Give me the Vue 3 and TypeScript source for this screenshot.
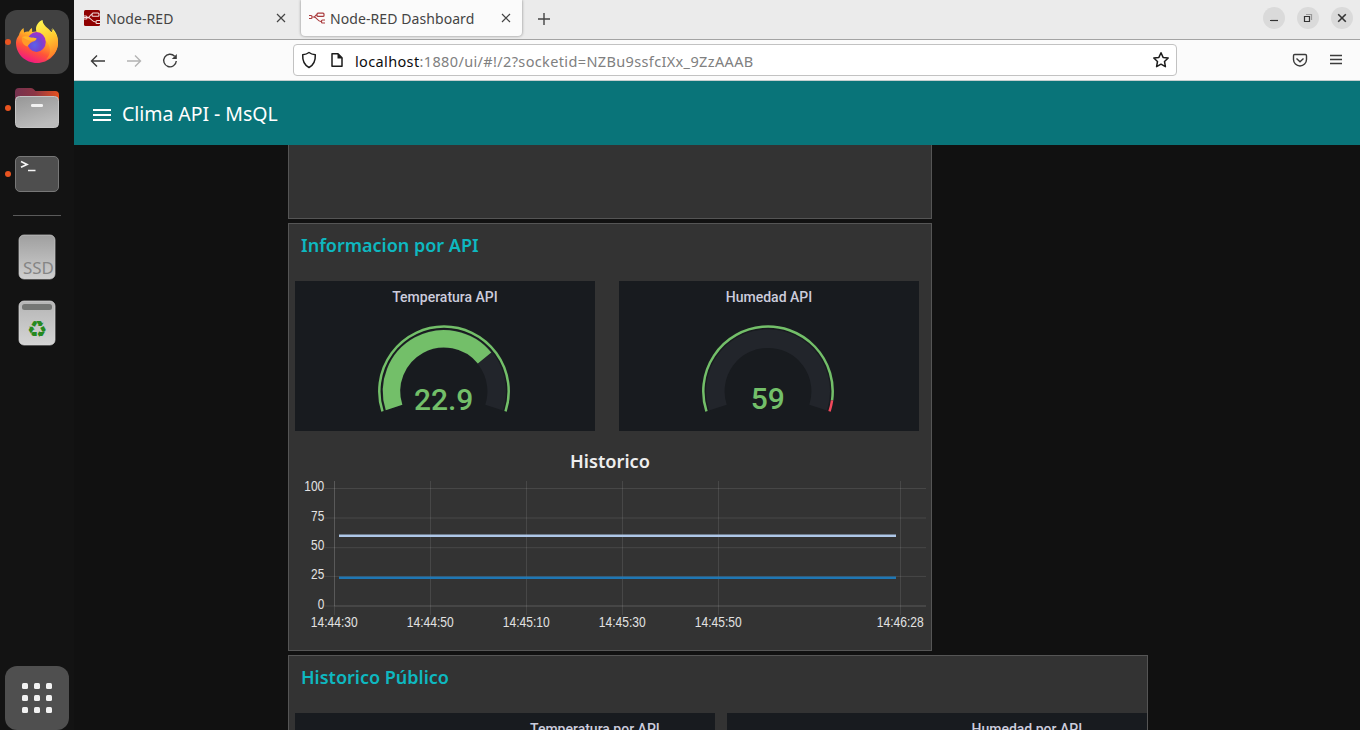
<script setup lang="ts">
interface Gauge {
  title: string
  value: string
  baseline: number
  valueEnd: number | null
  redFrom: number | null
}

const gauges: Gauge[] = [
  { title: 'Temperatura API', value: '22.9', baseline: 129, valueEnd: 50.6, redFrom: null },
  { title: 'Humedad API', value: '59', baseline: 127.5, valueEnd: null, redFrom: 98 },
]

const CX = 149
const CY = 110.3

// Angles are in degrees, clockwise from the top of the dial.
function arc(r: number, from: number, to: number): string {
  const point = (deg: number) => {
    const a = (deg * Math.PI) / 180
    return `${(CX + r * Math.sin(a)).toFixed(2)} ${(CY - r * Math.cos(a)).toFixed(2)}`
  }
  return `M${point(from)}A${r} ${r} 0 ${to - from > 180 ? 1 : 0} 1 ${point(to)}`
}

const xTicks = [
  { x: 39.5, label: '14:44:30' },
  { x: 135.5, label: '14:44:50' },
  { x: 231.5, label: '14:45:10' },
  { x: 327.5, label: '14:45:30' },
  { x: 423.5, label: '14:45:50' },
  { x: 605.5, label: '14:46:28' },
]
const yTicks = [
  { y: 48.5, label: '100', w: 20 },
  { y: 78, label: '75', w: 13.2 },
  { y: 107.7, label: '50', w: 13.2 },
  { y: 136.4, label: '25', w: 13.2 },
  { y: 166, label: '0', w: 6.6 },
]
</script>

<template>
  <div class="desktop">
    <aside class="dock">
      <div class="item tile running">
        <svg width="46" height="46" viewBox="0 0 46 46">
          <defs>
            <linearGradient id="ffBody" x1="0.8" y1="0.05" x2="0.3" y2="1">
              <stop offset="0" stop-color="#fff04a" />
              <stop offset="0.35" stop-color="#ffa726" />
              <stop offset="0.65" stop-color="#ff5438" />
              <stop offset="1" stop-color="#f0128a" />
            </linearGradient>
            <radialGradient id="ffGlobe" cx="0.4" cy="0.65" r="0.65">
              <stop offset="0" stop-color="#5a62ea" />
              <stop offset="0.55" stop-color="#7344d2" />
              <stop offset="1" stop-color="#a531c9" />
            </radialGradient>
            <linearGradient id="ffTail" x1="0.3" y1="0" x2="0.6" y2="1">
              <stop offset="0" stop-color="#fff44f" />
              <stop offset="0.5" stop-color="#ffc82f" />
              <stop offset="1" stop-color="#ff7b28" />
            </linearGradient>
          </defs>
          <path d="M5 16c.5-3 2-5 4.500-7l.6 4.500c1.400-1 3-1.300 4.900-1 .4-1.500 1.500-2.700 3-3.500l.2 4c5-1 8-1 10-1 4-2 9 0 11 2 0-2-.4-3.500-1.200-5 4.500 4 6 9 6 14.500C44 35 34.500 44 23 44S2 35 2 24c0-3 1-5.500 3-8z" fill="url(#ffBody)" />
          <path d="M22 10c0-4 3-8 6.500-9 .3 4 2.500 6 5.500 8.500 2 1.700 3.300 3.500 4 5.500.2-2 0-3.300-.8-5C42 14 44 18 44 23.500c0 9-6 15-12 17 4-4 5-9 3-14-2-6-7-7-9-10-1.500-1-4-3-4-6.500z" fill="url(#ffTail)" />
          <ellipse cx="22.500" cy="23" rx="9.300" ry="10" fill="url(#ffGlobe)" />
          <path d="M8 18c5-2 7 .5 9.500.7 3 .2 4.700.1 5 1-.4 2.300-4 2.800-5.500 3.700-1.700 1.200-2.700 2.700-3.500 4.100C9.500 27 7 22 8 18z" fill="#ff9a28" />
          <path d="M8 18c5-2 7 .5 9.500.7 3 .2 4.700.1 5 1-.6 1.800-5 2.400-8 1.600C12 20.500 10 19 8 18z" fill="#ffb52b" />
        </svg>
      </div>
      <div class="item running">
        <svg width="46" height="42" viewBox="0 0 46 42">
          <defs>
            <linearGradient id="folderBack"><stop offset="0" stop-color="#75324f" /><stop offset="0.45" stop-color="#8c3544" /><stop offset="1" stop-color="#e7521f" /></linearGradient>
            <linearGradient id="folderFront" x1="0" y1="0" x2="0.4" y2="1"><stop offset="0" stop-color="#969696" /><stop offset="1" stop-color="#bcbcbc" /></linearGradient>
          </defs>
          <path d="M1 12V5q0-4 4-4h12q2 0 3 1.500L21.500 4H41q4 0 4 4v6H1z" fill="url(#folderBack)" />
          <rect x="1.500" y="9.500" width="43" height="31" rx="4" fill="url(#folderFront)" stroke="#c5c5c5" />
          <rect x="17" y="17" width="12" height="3" rx="1.300" fill="#f2f2f2" />
        </svg>
      </div>
      <div class="item running">
        <svg width="46" height="38" viewBox="0 0 46 38">
          <rect x="1.500" y="1.500" width="43" height="35" rx="4.500" fill="#4e4e4e" stroke="#777" />
          <path d="M7 6.500l6 2.900L7 12.300M14 15.500h7.500" fill="none" stroke="#f5f5f5" stroke-width="1.700" />
        </svg>
      </div>
      <hr class="sep">
      <div class="item">
        <svg width="38" height="46" viewBox="0 0 38 46">
          <defs><linearGradient id="disk" x2="0" y2="1"><stop offset="0" stop-color="#9f9f9f" /><stop offset="1" stop-color="#cfcfcf" /></linearGradient></defs>
          <rect x="1" y="1" width="36" height="44" rx="5" fill="url(#disk)" stroke="#c9c9c9" stroke-width=".7" />
          <text class="ssd" x="5" y="39.500" textLength="31" lengthAdjust="spacingAndGlyphs">SSD</text>
        </svg>
      </div>
      <div class="item">
        <svg width="38" height="46" viewBox="0 0 38 46">
          <defs><linearGradient id="bin" x2="0" y2="1"><stop offset="0" stop-color="#b5b5b5" /><stop offset="1" stop-color="#d4d4d4" /></linearGradient></defs>
          <rect x="1" y="1" width="36" height="44" rx="5" fill="url(#bin)" stroke="#dadada" stroke-width=".7" />
          <rect x="4" y="4" width="30" height="6" rx="2.500" fill="#757775" />
          <text class="recycle" x="19" y="37">♻</text>
        </svg>
      </div>
      <div class="item tile apps">
        <i v-for="n in 9" :key="n" />
      </div>
    </aside>

    <main class="window">
      <div class="tabs">
        <div class="tab">
          <svg class="fav" width="16" height="16" viewBox="0 0 16 16">
            <rect width="16" height="16" rx="1.500" fill="#8f0000" />
            <g fill="none" stroke="#f4dede" stroke-width="1.100"><path d="M0 7.500h3.500C7 7.500 5 4.500 8 4.500M3.500 7.500c4 0 4 4.500 8 4.500" /><rect x="8" y="3" width="7" height="3.200" rx="1" /><path d="M16 10.500h-3q-1 0-1 1v1q0 1 1 1h3M0 6h2q1 0 1 1v1q0 1-1 1H0" /></g>
          </svg>
          <span class="tab-label">Node-RED</span>
          <svg class="close" width="10" height="10" viewBox="0 0 10 10"><path d="M1 1l8 8M9 1L1 9" /></svg>
        </div>
        <div class="tab active">
          <svg class="fav" width="16" height="16" viewBox="0 0 16 16">
            <g fill="none" stroke="#aa3a3c" stroke-width="1.200"><path d="M3.500 7h1C7 7 6 4.800 8 4.800M4.500 7c4 0 3.500 4.500 7.500 4.500" /><rect x="8" y="3.200" width="7" height="3.200" rx="1" /><path d="M16 10h-2.500q-1 0-1 1v1q0 1 1 1H16M0 5.500h2q1 0 1 1v1q0 1-1 1H0" /></g>
          </svg>
          <span class="tab-label">Node-RED Dashboard</span>
          <svg class="close" width="10" height="10" viewBox="0 0 10 10"><path d="M1 1l8 8M9 1L1 9" /></svg>
        </div>
        <svg class="plus" width="12" height="12" viewBox="0 0 12 12"><path d="M6 0v12M0 6h12" /></svg>
        <div class="controls">
          <span><svg width="10" height="10" viewBox="0 0 10 10"><path d="M1 7.500h8" /></svg></span>
          <span><svg width="10" height="10" viewBox="0 0 10 10"><path d="M1.500 3.500h5v5h-5z" /><path d="M3 1.500h5.500V7" stroke="#999" /></svg></span>
          <span><svg width="10" height="10" viewBox="0 0 10 10"><path d="M1.200 1.200l7.600 7.600M8.800 1.200L1.200 8.800" stroke-width="1.600" /></svg></span>
        </div>
      </div>

      <div class="toolbar">
        <svg class="tool" width="16" height="16" viewBox="0 0 16 16"><path d="M15 8H1.500M7 2.500L1.500 8 7 13.500" /></svg>
        <svg class="tool dim" width="16" height="16" viewBox="0 0 16 16"><path d="M1 8h13.500M9 2.500L14.500 8 9 13.500" /></svg>
        <svg class="tool" width="16" height="16" viewBox="0 0 16 16"><path d="M12.600 3.200A6.300 6.300 0 1 0 14.300 8" /><path d="M14.800 1v5H9.800z" fill="#3b3b3b" stroke="none" /></svg>
        <div class="url">
          <svg class="ico" width="16" height="18" viewBox="0 0 16 18"><path d="M8 1.500c2 1.500 4 2 6.300 2.300C14.600 10 13 14 8 16.500 3 14 1.400 10 1.700 3.800 4 3.500 6 3 8 1.500z" /></svg>
          <svg class="ico page" width="14" height="16" viewBox="0 0 14 16"><path d="M2 1.800h6l4 4v8.400H2z" /><path d="M7.500 1.500v5h5z" fill="#1c1c1c" stroke="none" /></svg>
          <p class="addr"><b>localhost</b>:1880/ui/#!/2?socketid=NZBu9ssfcIXx_9ZzAAAB</p>
          <svg class="ico star" width="18" height="18" viewBox="0 0 18 18"><path d="M9 1.700l2.100 4.700 5.100.6-3.700 3.500.9 5.200L9 13.200l-4.400 2.500.9-5.200L1.800 7l5.100-.6z" /></svg>
        </div>
        <svg class="tool pocket" width="16" height="16" viewBox="0 0 16 16"><path d="M2.700 2.500h10.600q1.200 0 1.200 1.200V7.500a6.500 6.500 0 0 1-13 0V3.700q0-1.200 1.200-1.200zM4.500 6.500L8 9.700l3.500-3.200" /></svg>
        <svg class="tool menu" width="14" height="14" viewBox="0 0 14 14"><path d="M1 2.500h12M1 6.500h12M1 10.500h12" /></svg>
      </div>

      <header class="app-bar">
        <svg width="18" height="12" viewBox="0 0 18 12"><path d="M0 0h18v2H0zM0 5h18v2H0zM0 10h18v2H0z" fill="#fff" /></svg>
        <h1>Clima API - MsQL</h1>
      </header>

      <section class="board">
        <div class="card empty" />
        <div class="card info">
          <h2>Informacion por API</h2>
          <div class="row">
            <svg v-for="g in gauges" :key="g.title" class="gauge" width="300" height="150" viewBox="0 0 300 150">
              <text class="gauge-title" x="150" y="21">{{ g.title }}</text>
              <path :d="arc(52.7, -108, 108)" stroke="#22252b" stroke-width="18.600" />
              <path v-if="g.valueEnd !== null" :d="arc(52.5, -108, g.valueEnd)" stroke="#73bf69" stroke-width="17.400" />
              <path :d="arc(64.7, -108, g.redFrom ?? 108)" stroke="#73bf69" stroke-width="2.500" />
              <path v-if="g.redFrom !== null" :d="arc(64.7, g.redFrom, 108)" stroke="#f2495c" stroke-width="2.500" />
              <text class="gauge-value" x="148.700" :y="g.baseline">{{ g.value }}</text>
            </svg>
          </div>
          <svg class="chart" width="636" height="210" viewBox="0 0 636 210">
            <text class="chart-title" x="275" y="27.500" textLength="80" lengthAdjust="spacingAndGlyphs">Historico</text>
            <g class="grid">
              <path v-for="t in yTicks" :key="t.label" :d="`M29.500 ${t.y}H631`" />
              <path v-for="t in xTicks" :key="t.label" :d="`M${t.x} 41V175`" />
              <path d="M39.500 41V166M39.500 166H631" />
            </g>
            <path d="M44 95.700h557" stroke="#aec7e8" stroke-width="2.500" />
            <path d="M44 137.700h557" stroke="#1f77b4" stroke-width="2.500" />
            <g class="ticks">
              <text v-for="t in yTicks" :key="t.label" :x="29.300 - t.w" :y="t.y + 2.7" :textLength="t.w" lengthAdjust="spacingAndGlyphs">{{ t.label }}</text>
              <text v-for="t in xTicks" :key="t.label" :x="t.x - 23.7" y="187" textLength="46.800" lengthAdjust="spacingAndGlyphs">{{ t.label }}</text>
            </g>
          </svg>
        </div>
        <div class="card public">
          <h2>Historico Público</h2>
          <div class="row wide">
            <div class="panel"><span>Temperatura por API</span></div>
            <div class="panel"><span>Humedad por API</span></div>
          </div>
        </div>
      </section>
    </main>
  </div>
</template>

<style scoped>
.desktop { display: flex; width: 1360px; height: 730px; overflow: hidden; background: #111; font-family: "Noto Sans", "Open Sans", sans-serif; }
svg { display: block; flex: none; }
h1, h2, p { margin: 0; white-space: nowrap; }

.dock { width: 74px; flex: none; box-sizing: border-box; padding: 10px 5px 0; display: flex; flex-direction: column; gap: 2px; background: #131313; }
.item { position: relative; width: 64px; height: 64px; flex: none; display: flex; align-items: center; justify-content: center; }
.tile { border-radius: 12px; background: #414141; }
.running::before { content: ""; position: absolute; left: 0; top: 29px; width: 6px; height: 6px; border-radius: 50%; background: #e95420; }
.sep { width: 48px; height: 1px; margin: 7px auto 7px; border: 0; background: #5a5a5a; flex: none; }
.ssd { font: 17px "Noto Sans", sans-serif; fill: #858585; }
.recycle { font: 23px "DejaVu Sans", sans-serif; text-anchor: middle; fill: #26891f; }
.apps { margin-top: auto; background: #4f4f4f; display: grid; grid-template-columns: repeat(3, 6px); gap: 6px; align-content: center; }
.apps i { width: 6px; height: 6px; border-radius: 1.5px; background: #f2f2f2; }

.window { flex: 1; min-width: 0; display: flex; flex-direction: column; }
.tabs { height: 39px; flex: none; display: flex; align-items: flex-start; background: #ebebeb; border-bottom: 1px solid #a3a3a3; }
.tab { width: 227px; height: 36px; box-sizing: border-box; display: flex; align-items: center; padding: 0 15px 0 10px; }
.tab.active { width: 221px; background: #fbfbfb; border-radius: 0 0 4px 4px; box-shadow: 0 0 3px rgba(0, 0, 0, .45); padding: 0 11px 0 8px; }
.fav { margin-right: 6px; }
.active .fav { margin-right: 5px; }
.tab-label { flex: 1; white-space: nowrap; font-size: 14px; letter-spacing: .08px; color: #444; line-height: 20px; padding-top: 1px; }
.close, .plus { fill: none; stroke: #444; stroke-width: 1.2; }
.plus { margin: 13px 0 0 15.500px; stroke-width: 1.4; }
.controls { margin-left: auto; display: flex; gap: 12px; padding: 7px 7px 0 0; }
.controls span { width: 22px; height: 22px; border-radius: 50%; background: #dadada; display: flex; align-items: center; justify-content: center; }
.controls svg { fill: none; stroke: #333; stroke-width: 1.2; }

.toolbar { height: 40px; flex: none; display: flex; align-items: center; background: #fbfbfb; border-bottom: 1px solid #c4cfcf; padding-left: 16px; }
.tool { fill: none; stroke: #3b3b3b; stroke-width: 1.4; margin-right: 20px; position: relative; top: 1px; }
.tool.dim { stroke: #b3b3b3; }
.url { width: 884px; height: 32px; flex: none; box-sizing: border-box; margin-left: 95px; border: 1px solid #c2c2c2; border-radius: 4px; background: #fff; display: flex; align-items: center; padding-left: 7px; }
.ico { fill: none; stroke: #1c1c1c; stroke-width: 1.5; stroke-linejoin: round; }
.page { margin-left: 13px; }
.addr { margin-left: 11px; font-size: 14.5px; color: #808080; line-height: 20px; letter-spacing: .36px; padding-top: 1px; }
.addr b { font-weight: 400; color: #0c0c0d; }
.star { margin: 0 6px 0 auto; }
.pocket { margin: 0 0 0 115px; top: 0; }
.menu { margin: 0 0 0 21px; top: 0; }

.app-bar { height: 64px; flex: none; display: flex; align-items: center; gap: 11px; padding: 4px 0 0 19px; box-sizing: border-box; background: #097479; }
.app-bar h1 { font-size: 19.5px; font-weight: 400; color: #fff; line-height: 28px; margin-top: -3px; letter-spacing: -.05px; }

.board { flex: 1; min-height: 0; overflow: hidden; display: flex; flex-direction: column; gap: 4px; padding-left: 214px; }
.card { width: 644px; box-sizing: border-box; border: 1px solid #555; background: #333; flex: none; }
.empty { height: 74px; border-top: 0; }
.info { height: 428px; padding: 0 6px; }
.public { width: 860px; height: 300px; padding: 0 0 0 6px; }
.card h2 { height: 57px; line-height: 42px; padding-left: 6px; font-size: 18px; font-weight: 600; color: #0eb8c0; box-sizing: border-box; }
.row { display: flex; gap: 24px; }
.wide { gap: 12px; }
.gauge { background: #181b1f; fill: none; }
.gauge-title, .panel { font: 500 14px Roboto, sans-serif; }
.gauge-title { text-anchor: middle; fill: #ccccdc; }
.gauge-value { font: 500 30px Roboto, sans-serif; text-anchor: middle; fill: #73bf69; }
.chart { margin-top: 9px; fill: none; }
.chart-title { font: 600 18px "Noto Sans", sans-serif; fill: #eee; }
.grid { stroke: rgba(255, 255, 255, .1); }
.ticks { font: 14.5px "Liberation Sans", sans-serif; fill: #e2e2e2; }
.panel { width: 420px; height: 200px; flex: none; box-sizing: border-box; padding: 8px 0 0 235px; background: #181b1f; color: #ccccdc; line-height: 16px; white-space: nowrap; }
.panel + .panel { padding-left: 244.5px; }
</style>

<style>
body { overflow: hidden; background: #111; }
</style>
